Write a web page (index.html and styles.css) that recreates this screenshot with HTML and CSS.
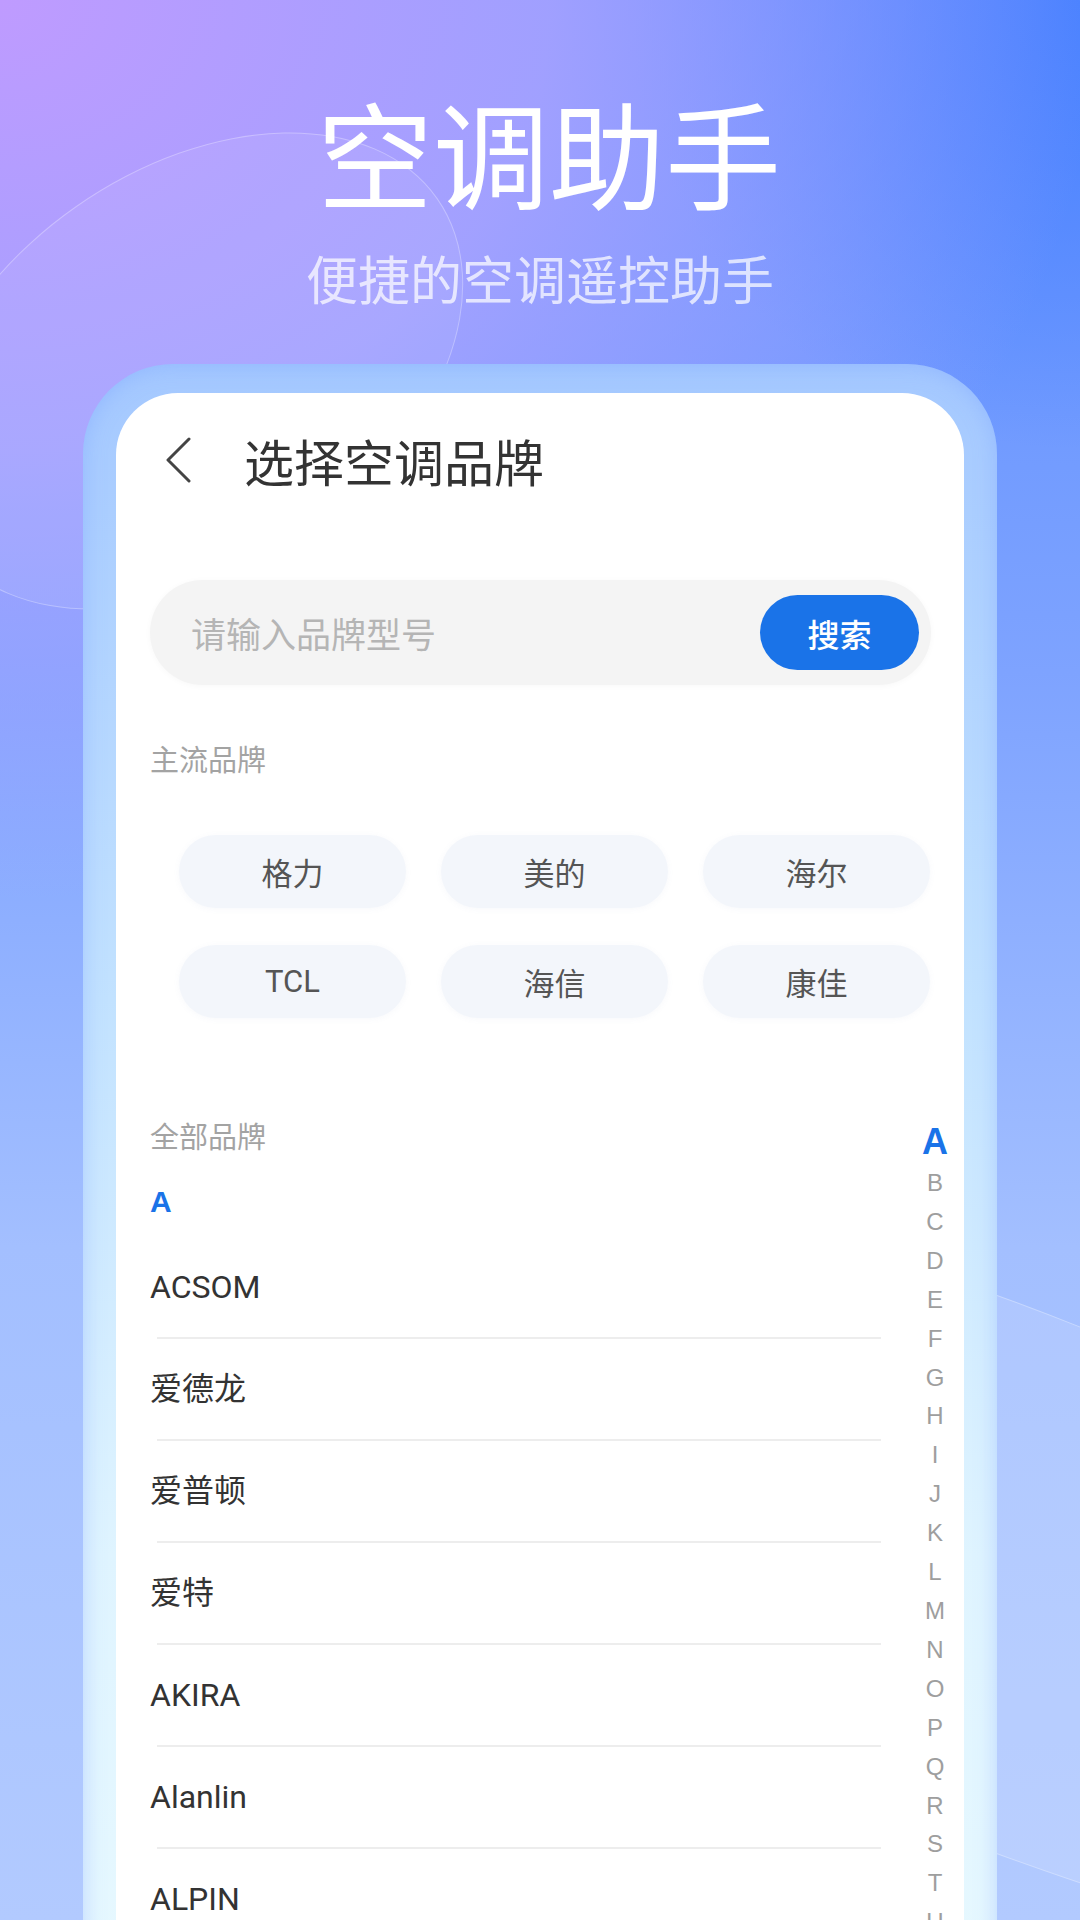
FILE: index.html
```html
<!DOCTYPE html>
<html lang="zh-CN">
<head>
  <meta charset="UTF-8" />
  <meta name="viewport" content="width=device-width, initial-scale=1" />
  <title>空调助手</title>
  <link rel="stylesheet" href="styles.css">
</head>
<body>
  <div class="bubble bubble-top"></div>
  <div class="bubble bubble-bottom"></div>

  <header class="hero">
    <h1>空调助手</h1>
    <p>便捷的空调遥控助手</p>
  </header>

  <div class="phone">
    <main class="screen">
      <div class="topbar">
        <svg class="back" width="26" height="46" viewBox="0 0 26 46">
          <path d="M24 2 L3 23 L24 44" fill="none" stroke="#444" stroke-width="3" stroke-linecap="round" stroke-linejoin="round"/>
        </svg>
        <span class="topbar-title">选择空调品牌</span>
      </div>

      <form class="search" autocomplete="off">
        <input type="text" placeholder="请输入品牌型号" />
        <button type="button">搜索</button>
      </form>

      <div class="label">主流品牌</div>
      <div class="chips">
        <div class="chip">格力</div>
        <div class="chip">美的</div>
        <div class="chip">海尔</div>
        <div class="chip">TCL</div>
        <div class="chip">海信</div>
        <div class="chip">康佳</div>
      </div>

      <section class="all">
        <div class="all-list">
          <div class="label">全部品牌</div>
          <div class="letter">A</div>
          <div class="row">ACSOM</div>
          <div class="row">爱德龙</div>
          <div class="row">爱普顿</div>
          <div class="row">爱特</div>
          <div class="row">AKIRA</div>
          <div class="row">Alanlin</div>
          <div class="row">ALPIN</div>
        </div>
        <ul class="index">
          <li class="on">A</li>
          <li>B</li><li>C</li><li>D</li><li>E</li><li>F</li><li>G</li>
          <li>H</li><li>I</li><li>J</li><li>K</li><li>L</li><li>M</li>
          <li>N</li><li>O</li><li>P</li><li>Q</li><li>R</li><li>S</li>
          <li>T</li><li>U</li>
        </ul>
      </section>
    </main>
  </div>
</body>
</html>
```

FILE: styles.css
```css
:root {
  --blue: #1a73e8;
  --text: #333;
  --muted: #9e9e9e;
  --cjk: "Noto Sans CJK SC", sans-serif;
  --latin: Roboto, "Noto Sans CJK SC", sans-serif;
}
html, body {
  margin: 0; height: 100%;
}
body {
  width: 1080px; height: 1920px; overflow: hidden;
  position: relative;
  display: flex; flex-direction: column;
  font-family: var(--cjk);
  background:
    radial-gradient(ellipse 1100px 900px at 0 0, #bf9bff 0%, rgba(172,163,255,.85) 50%, rgba(165,165,255,0) 100%),
    radial-gradient(circle 450px at 100% 0, #4a82ff 0%, rgba(74,130,255,0) 100%),
    linear-gradient(180deg, #5a8cff 0%, #7ea3ff 35%, #a3bfff 65%, #b2caff 100%);
}

/* decorative shapes behind everything */
.bubble {
  position: absolute; border-radius: 50%;
  background: rgba(255,255,255,.07);
  border: 1.5px solid rgba(255,255,255,.28);
  z-index: 0;
}
.bubble-top {
  left: -110px; top: 170px; width: 600px; height: 400px;
  transform: rotate(-35deg);
}
.bubble-bottom {
  left: 100px; top: 1315px; width: 1800px; height: 520px;
  transform: rotate(22deg);
  background: rgba(255,255,255,.12);
}

.hero {
  position: relative; z-index: 1;
  text-align: center; color: #fff;
  padding-top: 85px;
}
.hero h1 {
  margin: 0; font-size: 116px; line-height: 130px; font-weight: 400;
  padding-left: 18px;
}
.hero p {
  margin: 33px 0 0; font-size: 52px; line-height: 60px;
  color: rgba(255,255,255,.72);
}

.phone {
  position: relative; z-index: 1;
  flex: 1; margin: 56px 83px 0;
  padding: 29px 33px 0;
  border-radius: 90px 90px 0 0;
  background: linear-gradient(180deg, #a4c8ff 0%, #c2e2ff 40%, #dff4ff 75%, #e6f8ff 100%);
  box-shadow: inset 0 0 22px rgba(110,150,255,.35);
  display: flex;
}
.screen {
  flex: 1; background: #fff;
  border-radius: 62px 62px 0 0;
  padding: 0 33px 0 34px;
  overflow: hidden;
}

.topbar {
  display: flex; align-items: center;
  height: 60px; padding: 37px 0 0 15px;
}
.back { display: block; }
.topbar-title {
  margin-left: 53px;
  font-size: 50px; line-height: 60px; color: var(--text);
}

.search {
  margin: 90px 0 0;
  height: 105px; border-radius: 53px;
  background: #f4f4f4;
  box-shadow: 0 1px 6px rgba(0,0,0,.03);
  display: flex; align-items: center;
  padding: 0 12px 0 41px;
}
.search input {
  flex: 1; border: none; background: transparent; outline: none;
  font-family: var(--cjk); font-size: 35px; color: var(--text);
  padding: 0;
}
.search input::placeholder { color: #b5b5b5; }
.search button {
  width: 159px; height: 75px; border: none; border-radius: 38px;
  background: var(--blue); color: #fff;
  font-family: var(--cjk); font-size: 32px; font-weight: 500;
}

.label {
  font-size: 29px; line-height: 40px; color: #a3a3a3;
  margin-top: 53px;
}
.chips {
  display: grid; grid-template-columns: repeat(3, 227px);
  column-gap: 35px; row-gap: 37px;
  margin-top: 57px; padding-left: 29px;
}
.chip {
  height: 73px; border-radius: 37px;
  background: #f3f6fb;
  box-shadow: 0 1px 6px rgba(120,140,180,.06);
  display: flex; align-items: center; justify-content: center;
  font-family: var(--latin); font-size: 31px; color: #555;
}

.all {
  display: flex; margin-top: 44px; margin-right: -33px;
}
.all-list { flex: 1; margin-right: 25px; }
.all .label { margin-top: 53px; }
.letter {
  margin-top: 27px;
  font-family: "Liberation Sans", sans-serif; font-weight: 700;
  font-size: 30px; line-height: 40px; color: var(--blue);
}
.letter + .row { margin-top: 15px; }
.row {
  height: 102px; line-height: 100px;
  font-family: var(--latin); font-size: 32px; color: var(--text);
  background: linear-gradient(#ededed, #ededed) no-repeat 7px 100% / calc(100% - 7px) 2px;
}

.index {
  list-style: none; margin: 0; padding: 58px 0 0;
  width: 58px; text-align: center;
  font-family: "Liberation Sans", sans-serif;
  font-size: 24px; line-height: 38.9px; color: var(--muted);
}
.index .on {
  font-size: 36px; font-weight: 700; line-height: 44px; color: var(--blue);
}
```
